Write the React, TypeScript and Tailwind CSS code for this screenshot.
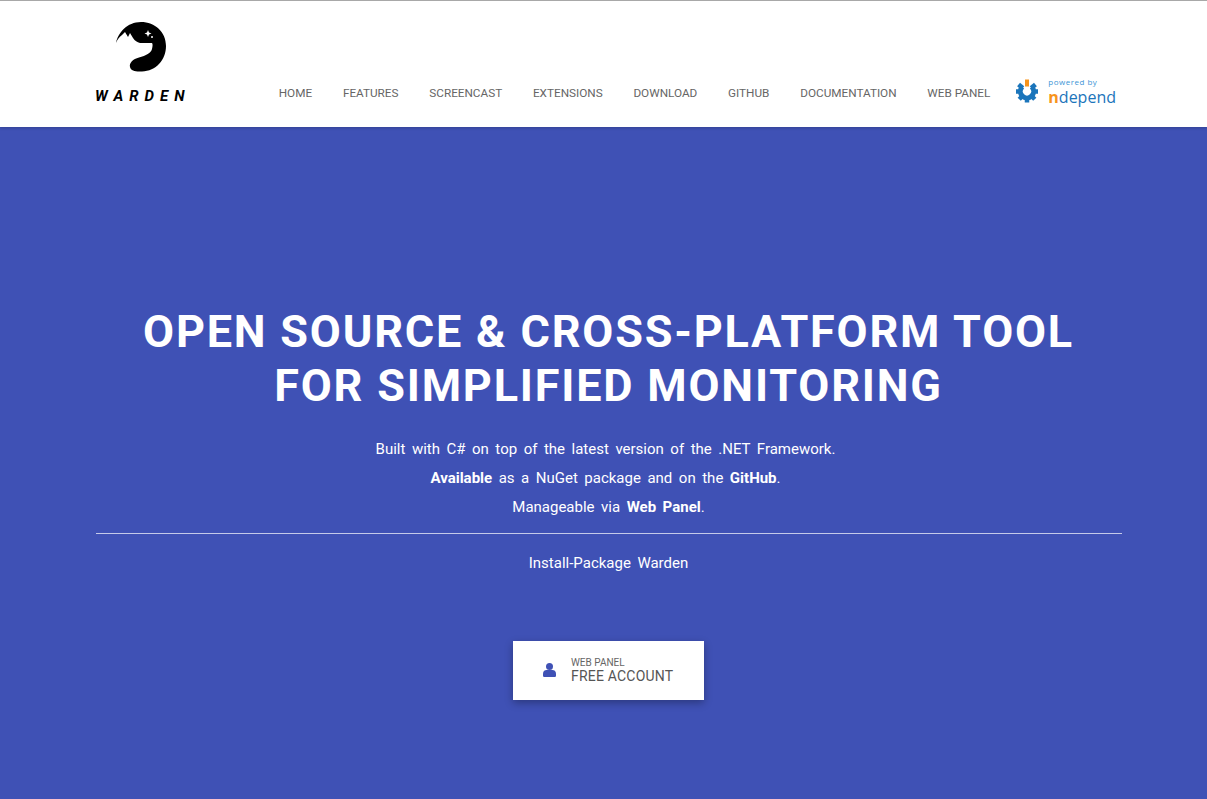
const navigation = ["HOME", "FEATURES", "SCREENCAST", "EXTENSIONS", "DOWNLOAD", "GITHUB", "DOCUMENTATION", "WEB PANEL"];

function WardenLogo() {
  return (
    <svg width="51" height="51" viewBox="0 0 51 51" className="ml-[21px] block">
      <path
        fill="#000"
        d="M0 21C2 11 11 0 25 0C39 0 50 10 50 24C50 38 40 49 26 49.5C20 50 15 49 14 45C13 41 17 37 23 35.5C30 33.5 35 31 36 27C36.5 25 37 22 36 21L24 21C21 20 19 19 17 16L14 11L12 15L9 10L6 13C3 15 1 18 0 21Z"
      />
      <path fill="#fff" d="M32 8L33 10.5L35.5 11.5L33 12.5L32 15L31 12.5L28.5 11.5L31 10.5Z" />
      <circle cx="36" cy="15" r="1" fill="#fff" />
    </svg>
  );
}

function NdependLogo() {
  const teeth = [-50, -90, -135, 180, 135, 90, 50];
  return (
    <div className="flex items-center gap-[9px] pb-[1.5px]">
      <svg width="24" height="24" viewBox="0 0 24 24">
        <path
          d="M7.3 7.7A6.6 6.6 0 1 0 16.7 7.7"
          fill="none"
          stroke="#1b75bb"
          strokeWidth="5"
        />
        {teeth.map((angle) => (
          <rect key={angle} x="9.75" y="1.5" width="4.5" height="5.5" fill="#1b75bb" transform={`rotate(${angle} 12 12.5)`} />
        ))}
        <rect x="10" y="0.5" width="4" height="7" fill="#f7941d" />
      </svg>
      <div className="flex flex-col items-start">
        <span className="text-[8px] leading-[10px] tracking-[0.5px] text-[#3d95d6] font-['Open_Sans',sans-serif]">powered by</span>
        <span className="mt-[2px] text-[16px] leading-[17px] text-[#1b75bb] font-['Open_Sans',sans-serif]">
          <span className="font-bold text-[#f7941d]">n</span>depend
        </span>
      </div>
    </div>
  );
}

export default function App() {
  return (
    <div className="min-h-[799px] bg-[#3f51b5] font-['Roboto',sans-serif]">
      <header className="flex h-[127px] items-end justify-between border-t border-[#a8a8a8] bg-white pb-[20px] pl-[95px] pr-[91px] shadow-[0_1px_3px_rgba(0,0,0,0.2)]">
        <div className="flex flex-col items-start pb-[2px]">
          <WardenLogo />
          <span className="mt-[14px] text-[15px] font-bold italic leading-[18px] tracking-[6px] text-black">WARDEN</span>
        </div>
        <div className="flex items-center">
          <nav className="flex gap-[30.75px] pt-[2.5px]">
            {navigation.map((item) => (
              <a key={item} href="#" className="text-[11.75px] leading-[14px] text-[#666]">
                {item}
              </a>
            ))}
          </nav>
          <div className="ml-[25px]">
            <NdependLogo />
          </div>
        </div>
      </header>

      <main className="flex flex-col items-center pl-[95px] pr-[85px] pt-[178px] text-white">
        <h1 className="text-center text-[45px] font-bold leading-[54px] tracking-[1.8px]">
          OPEN SOURCE &amp; CROSS-PLATFORM TOOL
          <br />
          FOR SIMPLIFIED MONITORING
        </h1>
        <div className="mt-[22px] text-center text-[15px] leading-[29px] [word-spacing:2.8px]">
          <p className="pr-[6px]">Built with C# on top of the latest version of the .NET Framework.</p>
          <p className="pr-[6px]">
            <strong className="font-bold">Available</strong> as a NuGet package and on the <strong className="font-bold">GitHub</strong>.
          </p>
          <p>
            Manageable via <strong className="font-bold">Web Panel</strong>.
          </p>
        </div>
        <hr className="mt-[11px] w-[1026px] border-t border-[#c5cae9]" />
        <p className="mt-[15px] text-[15px] leading-[29px] [word-spacing:2.8px]">Install-Package Warden</p>
        <a
          href="#"
          className="mt-[63px] flex h-[59px] w-[191px] items-center gap-[16px] bg-white pl-[30px] shadow-[0_3px_8px_rgba(0,0,0,0.3)]"
        >
          <svg width="13" height="14" viewBox="0 0 13 14" className="-mt-[2px]">
            <circle cx="6.5" cy="3.5" r="3.5" fill="#3f51b5" />
            <path fill="#3f51b5" d="M0 10.5C0 8 2 7 3.5 7H9.5C11 7 13 8 13 10.5V12.5C13 13.5 12.3 14 11.5 14H1.5C0.7 14 0 13.5 0 12.5Z" />
          </svg>
          <div className="-ml-px flex flex-col">
            <span className="text-[10px] leading-[10px] text-[#666]">WEB PANEL</span>
            <span className="text-[14px] leading-[16px] tracking-[0.2px] text-[#555]">FREE ACCOUNT</span>
          </div>
        </a>
      </main>
    </div>
  );
}
